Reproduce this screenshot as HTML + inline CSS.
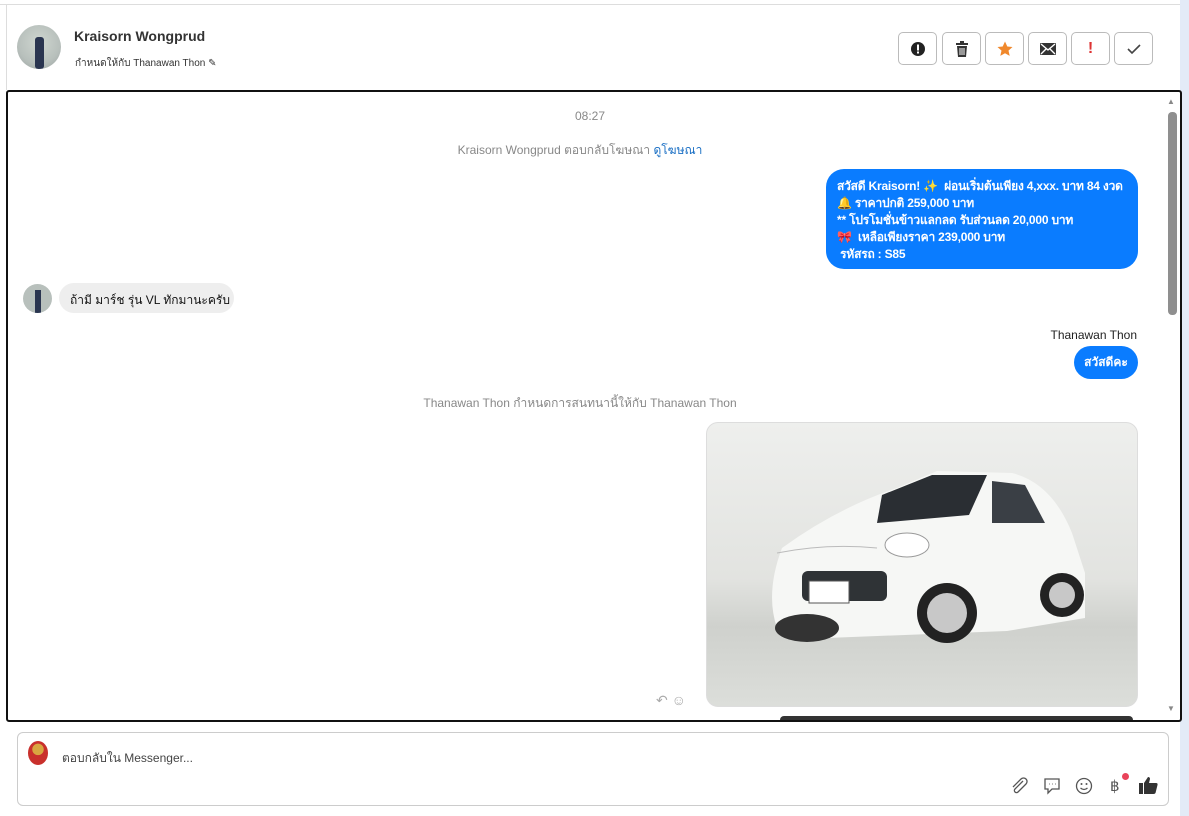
<!DOCTYPE html>
<html><head><meta charset="utf-8"><style>
*{box-sizing:border-box;margin:0;padding:0}
body{width:1189px;height:816px;background:#fff;font-family:"Liberation Sans","Noto Sans CJK SC",sans-serif;position:relative;overflow:hidden;color:#333}
.a{position:absolute}
.btn{position:absolute;top:32px;width:39px;height:33px;border:1px solid #bbb;border-radius:5px;background:#fff;display:flex;align-items:center;justify-content:center}
.gray{color:#888;font-size:12px;text-align:center;width:1160px;left:0}
</style></head><body>
<div class="a" style="left:1180px;top:0;width:9px;height:816px;background:#e3ebf7"></div>
<div class="a" style="left:0;top:4px;width:1180px;height:1px;background:#ddd"></div>
<div class="a" style="left:6px;top:5px;width:1px;height:85px;background:#ddd"></div>
<div class="a" style="left:17px;top:25px;width:44px;height:44px;border-radius:50%;overflow:hidden;background:radial-gradient(circle at 50% 40%,#cfd6d0 0,#b8c0bc 60%,#9aa2a0 100%)"><div class="a" style="left:18px;top:12px;width:9px;height:32px;background:#2a3550;border-radius:3px"></div></div>
<div class="a" style="left:74px;top:28px;font-size:14px;font-weight:bold;color:#333">Kraisorn Wongprud</div>
<div class="a" style="left:75px;top:56px;font-size:10px;color:#333">กำหนดให้กับ Thanawan Thon ✎</div>
<div class="btn" style="left:898px"><svg width="16" height="16"><circle cx="8" cy="8" r="7" fill="#222"/><rect x="7" y="3.5" width="2" height="6" fill="#fff"/><rect x="7" y="10.5" width="2" height="2" fill="#fff"/></svg></div>
<div class="btn" style="left:942px"><svg width="14" height="16"><rect x="1" y="2" width="12" height="2" fill="#333"/><rect x="5" y="0" width="4" height="2" fill="#333"/><path d="M2 5h10l-1 11H3z" fill="#333"/><path d="M5 7v7M7 7v7M9 7v7" stroke="#fff"/></svg></div>
<div class="btn" style="left:985px"><svg width="16" height="16"><path d="M8 0.5l2.3 5 5.2.5-4 3.6 1.2 5.3L8 12.2 3.3 14.9l1.2-5.3-4-3.6 5.2-.5z" fill="#f0882c"/></svg></div>
<div class="btn" style="left:1028px"><svg width="16" height="12"><rect width="16" height="12" rx="1" fill="#333"/><path d="M1 1l7 6 7-6M1 11l5-5M15 11l-5-5" stroke="#fff" stroke-width="1.4" fill="none"/></svg></div>
<div class="btn" style="left:1071px;color:#d33;font-weight:bold;font-size:16px">!</div>
<div class="btn" style="left:1114px"><svg width="14" height="12"><path d="M1 6l4 4 8-8" stroke="#444" stroke-width="1.6" fill="none"/></svg></div>

<div class="a" style="left:6px;top:90px;width:1176px;height:632px;border:2px solid #111;border-radius:3px"></div>
<div class="a" style="left:1168px;top:112px;width:9px;height:203px;background:#8f8f8f;border-radius:4px"></div>
<div class="a" style="left:1167px;top:97px;font-size:8px;color:#888">▲</div>
<div class="a" style="left:1167px;top:704px;font-size:8px;color:#888">▼</div>
<div class="a gray" style="top:109px;left:10px">08:27</div>
<div class="a gray" style="top:141px;left:0">Kraisorn Wongprud ตอบกลับโฆษณา <span style="color:#1a6fc4">ดูโฆษณา</span></div>
<div class="a" style="left:826px;top:169px;width:312px;height:100px;background:#0a7cff;border-radius:18px;color:#fff;font-size:12px;font-weight:bold;line-height:17px;padding:9px 11px;white-space:nowrap;letter-spacing:-0.2px">สวัสดี Kraisorn! ✨ &nbsp;ผ่อนเริ่มต้นเพียง 4,xxx. บาท 84 งวด<br>🔔 ราคาปกติ 259,000 บาท<br>** โปรโมชั่นข้าวแลกลด รับส่วนลด 20,000 บาท<br>🎀 &nbsp;เหลือเพียงราคา 239,000 บาท<br>&nbsp;รหัสรถ : S85</div>
<div class="a" style="left:23px;top:284px;width:29px;height:29px;border-radius:50%;background:#b8c0bc;overflow:hidden"><div class="a" style="left:12px;top:6px;width:6px;height:23px;background:#2a3550"></div></div>
<div class="a" style="left:59px;top:283px;width:175px;height:30px;background:#eee;border-radius:15px;font-size:12px;color:#111;padding:8px 11px;white-space:nowrap">ถ้ามี มาร์ช รุ่น VL ทักมานะครับ</div>
<div class="a" style="right:52px;top:328px;font-size:12px;color:#222">Thanawan Thon</div>
<div class="a" style="left:1074px;top:346px;width:64px;height:33px;background:#0a7cff;border-radius:17px;color:#fff;font-size:12px;font-weight:bold;text-align:center;line-height:33px">สวัสดีคะ</div>
<div class="a gray" style="top:394px;left:0">Thanawan Thon กำหนดการสนทนานี้ให้กับ Thanawan Thon</div>
<div class="a" style="left:706px;top:422px;width:432px;height:285px;border-radius:12px;overflow:hidden;background:linear-gradient(#eeefed 0,#e2e3e0 55%,#cfd1cd 72%,#dcdeda 100%);border:1px solid #ddd">
<svg width="432" height="285" style="position:absolute;left:0;top:0">
<path d="M75 125 Q130 85 190 65 L230 48 L305 50 Q345 60 365 110 L378 150 L378 195 L300 208 L120 215 L70 205 Q58 170 75 125z" fill="#f6f7f5"/>
<path d="M175 72 L225 52 L280 52 L262 92 L170 100z" fill="#2a2e33"/>
<path d="M285 58 L318 62 L338 100 L285 100z" fill="#3a3f45"/>
<path d="M70 130 Q120 120 170 125" stroke="#bbb" fill="none"/>
<ellipse cx="200" cy="122" rx="22" ry="12" fill="#fff" stroke="#999"/>
<rect x="95" y="148" width="85" height="30" fill="#2f3336" rx="6"/>
<rect x="102" y="158" width="40" height="22" fill="#fff" stroke="#555"/>
<ellipse cx="100" cy="205" rx="32" ry="14" fill="#333"/>
<circle cx="240" cy="190" r="30" fill="#222"/><circle cx="240" cy="190" r="20" fill="#c8c8c8"/>
<circle cx="355" cy="172" r="22" fill="#222"/><circle cx="355" cy="172" r="13" fill="#c8c8c8"/>
</svg></div>
<div class="a" style="left:656px;top:692px;color:#aaa;font-size:14px">↶ ☺</div>
<div class="a" style="left:780px;top:716px;width:353px;height:4px;background:#333;border-radius:4px 4px 0 0"></div>

<div class="a" style="left:17px;top:732px;width:1152px;height:74px;border:1px solid #ccc;border-radius:6px"></div>
<div class="a" style="left:28px;top:741px;width:20px;height:24px;border-radius:50%;background:radial-gradient(circle at 50% 35%,#d9a640 0,#d9a640 30%,#c9302c 32%,#c9302c 100%)"></div>
<div class="a" style="left:62px;top:749px;font-size:12px;color:#444">ตอบกลับใน Messenger...</div>
<svg class="a" style="left:1010px;top:777px" width="18" height="18"><path d="M13 4L5 12a2 2 0 003 3l8-8a3.5 3.5 0 00-5-5L3 10" stroke="#555" stroke-width="1.3" fill="none"/></svg>
<svg class="a" style="left:1043px;top:777px" width="18" height="18"><path d="M2 2h14v10H9l-4 4v-4H2z" stroke="#555" stroke-width="1.3" fill="none"/><path d="M6 7h.5M9 7h.5M12 7h.5" stroke="#555" stroke-width="1.5"/></svg>
<svg class="a" style="left:1075px;top:777px" width="18" height="18"><circle cx="9" cy="9" r="7.5" stroke="#555" stroke-width="1.3" fill="none"/><circle cx="6.5" cy="7" r="1" fill="#555"/><circle cx="11.5" cy="7" r="1" fill="#555"/><path d="M5.5 11q3.5 3 7 0" stroke="#555" stroke-width="1.2" fill="none"/></svg>
<div class="a" style="left:1110px;top:777px;font-size:15px;color:#555">฿</div>
<div class="a" style="left:1122px;top:773px;width:7px;height:7px;border-radius:50%;background:#e9435a"></div>
<svg class="a" style="left:1139px;top:776px" width="19" height="18"><rect x="0" y="7" width="4" height="11" fill="#333"/><path d="M5 7l4-6q2 0 2 2l-1 4h7q2 0 1.5 2l-2 8q-.5 1-2 1H5z" fill="#333"/></svg>
</body></html>
